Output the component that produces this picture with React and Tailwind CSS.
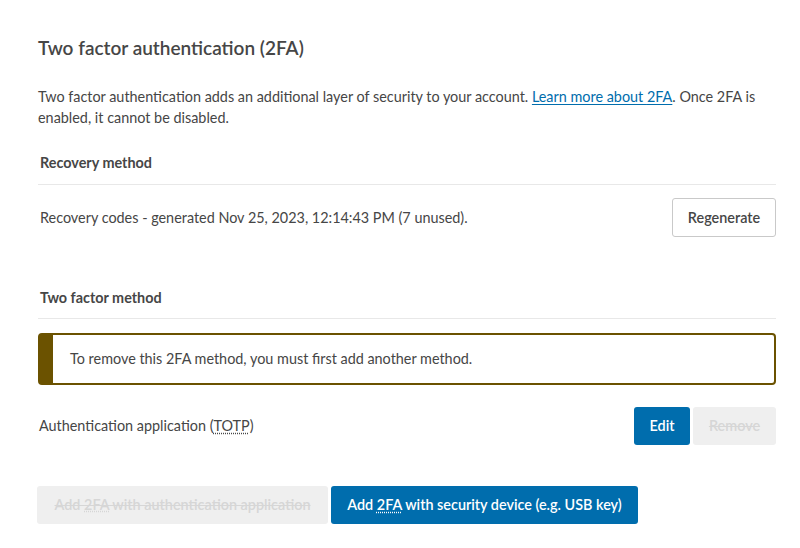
export default function App() {
  return (
    <div className="min-h-[548px] bg-white pl-[38px] pr-[24px] pt-[34px] text-[14.4px] text-[#464646]" style={{ fontFamily: 'Lato, "Liberation Sans", sans-serif' }}>
      <h2 className="text-[19px] leading-[28px] font-semibold">Two factor authentication (2FA)</h2>

      <p className="mt-[24px] leading-[21px]">
        Two factor authentication adds an additional layer of security to your account.{' '}
        <a href="#" className="text-[#006dad] underline underline-offset-2">
          Learn more about <abbr className="decoration-dotted">2FA</abbr>
        </a>
        . Once 2FA is enabled, it cannot be disabled.
      </p>

      <h3 className="mt-[24px] pl-[2px] pb-[11px] leading-[21px] font-bold border-b border-[#e8e8e8]">Recovery method</h3>
      <div className="mt-[13px] flex items-center justify-between pl-[2px]">
        <span>Recovery codes - generated Nov 25, 2023, 12:14:43 PM (7 unused).</span>
        <button className="h-[39px] w-[104px] rounded-[3px] border border-[#c9c9c9] bg-white font-semibold text-[#464646]">
          Regenerate
        </button>
      </div>

      <h3 className="mt-[50px] pl-[2px] pb-[10px] leading-[21px] font-bold border-b border-[#e8e8e8]">Two factor method</h3>
      <div className="mt-[14px] flex h-[52px] items-center rounded-[4px] border-2 border-l-[15px] border-[#6b5200] pl-[17px]">
        To remove this 2FA method, you must first add another method.
      </div>

      <div className="mt-[22px] flex items-center justify-between pl-[1px]">
        <span>
          Authentication application (<abbr className="underline decoration-dotted underline-offset-2">TOTP</abbr>)
        </span>
        <div className="flex gap-[3px]">
          <button className="h-[38px] w-[56px] rounded-[3px] bg-[#006dad] font-semibold text-white">Edit</button>
          <button disabled className="h-[38px] w-[83px] rounded-[3px] bg-[#efefef] font-semibold text-[#d6d6d6] line-through">Remove</button>
        </div>
      </div>

      <div className="mt-[41px] -ml-[1px] flex gap-[3px]">
        <button disabled className="h-[38px] w-[291px] rounded-[3px] bg-[#efefef] font-semibold text-[#d6d6d6] line-through">
          Add <abbr className="underline decoration-dotted">2FA</abbr> with authentication application
        </button>
        <button className="h-[38px] w-[307px] rounded-[3px] bg-[#006dad] font-semibold text-white">
          Add <abbr className="underline decoration-dotted underline-offset-2">2FA</abbr> with security device (e.g. USB key)
        </button>
      </div>
    </div>
  )
}
